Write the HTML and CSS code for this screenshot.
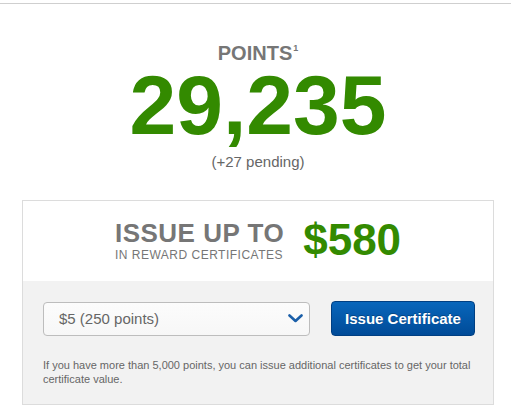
FILE: index.html
```html
<!DOCTYPE html>
<html lang="en">
<head>
    <meta charset="UTF-8">
    <meta name="viewport" content="width=device-width, initial-scale=1.0">
    <title>Rewards</title>
    <link rel="stylesheet" href="styles.css">
</head>
<body>

    <div class="topbar"></div>

    <div class="container">
        <div class="points">
            <h2 class="points-label">POINTS<sup>1</sup></h2>
            <div class="points-value">29,235</div>
            <div class="points-pending">(+27 pending)</div>
        </div>

        <div class="reward-box">
            <div class="reward-top">
                <div class="reward-text">
                    <span class="reward-title">ISSUE UP TO</span>
                    <span class="reward-sub">IN REWARD CERTIFICATES</span>
                </div>
                <div class="reward-amount">$580</div>
            </div>

            <div class="reward-bottom">
                <div class="issue-row">
                    <div class="select">
                        <span>$5 (250 points)</span>
                        <svg width="15" height="9" viewBox="0 0 15 9">
                            <path d="M1.5 1.5 L7.5 7 L13.5 1.5" fill="none" stroke="#1b5fa9" stroke-width="2.6" stroke-linecap="round" stroke-linejoin="round"/>
                        </svg>
                    </div>
                    <button class="issue-btn">Issue Certificate</button>
                </div>
                <p class="note">If you have more than 5,000 points, you can issue additional certificates to get your total certificate value.</p>
            </div>
        </div>
    </div>

</body>
</html>
```

FILE: styles.css
```css
body {
    font-family: 'Liberation Sans', Arial, Helvetica, sans-serif;
    background-color: #fff;
    color: #666;
    margin: 0;
    padding: 0;
}
.topbar {
    height: 3px;
    border-bottom: 1px solid #cfcfcf;
}
.container {
    width: 472px;
    margin-left: 22px;
}
.points {
    text-align: center;
    padding-top: 40px;
}
.points-label {
    margin: 0;
    font-size: 20px;
    line-height: 19px;
    font-weight: bold;
    color: #767676;
}
.points-label sup {
    font-size: 9px;
    line-height: 9px;
    vertical-align: top;
    margin-left: 1px;
}
.points-value {
    font-size: 84px;
    line-height: 84px;
    font-weight: bold;
    color: #338a00;
}
.points-pending {
    margin-top: 7px;
    font-size: 15px;
    line-height: 15px;
    color: #666;
}
.reward-box {
    margin-top: 31px;
    border: 1px solid #dcdcdc;
}
.reward-top {
    height: 80px;
    display: flex;
    justify-content: center;
    align-items: center;
    gap: 19px;
    background-color: #fff;
}
.reward-text {
    display: flex;
    flex-direction: column;
    gap: 3px;
    margin-top: -2px;
    color: #767676;
}
.reward-title {
    font-size: 26px;
    line-height: 26px;
    font-weight: bold;
    letter-spacing: 0.5px;
}
.reward-sub {
    font-size: 12px;
    line-height: 12px;
    letter-spacing: 0.5px;
}
.reward-amount {
    font-size: 44px;
    line-height: 44px;
    font-weight: bold;
    color: #338a00;
    margin-top: -2px;
}
.reward-bottom {
    background-color: #f2f2f2;
    padding: 20px 18px 18px 20px;
}
.issue-row {
    display: flex;
    align-items: center;
    gap: 21px;
}
.select {
    width: 267px;
    height: 34px;
    box-sizing: border-box;
    padding: 0 6px 0 15px;
    display: flex;
    align-items: center;
    justify-content: space-between;
    background: linear-gradient(#fcfcfc, #f7f7f7);
    border: 1px solid #bdbdbd;
    border-radius: 4px;
    font-size: 15px;
    color: #666;
}
.issue-btn {
    width: 144px;
    height: 35px;
    padding: 0;
    font-family: inherit;
    font-size: 15px;
    font-weight: bold;
    color: #fff;
    text-shadow: 0 -1px 0 rgba(0, 0, 0, 0.25);
    background: linear-gradient(#0866bb, #004b98);
    border: 1px solid #003f82;
    border-radius: 4px;
    cursor: pointer;
}
.note {
    margin: 22px 0 0 0;
    font-size: 11px;
    line-height: 14px;
    color: #666;
}
```
